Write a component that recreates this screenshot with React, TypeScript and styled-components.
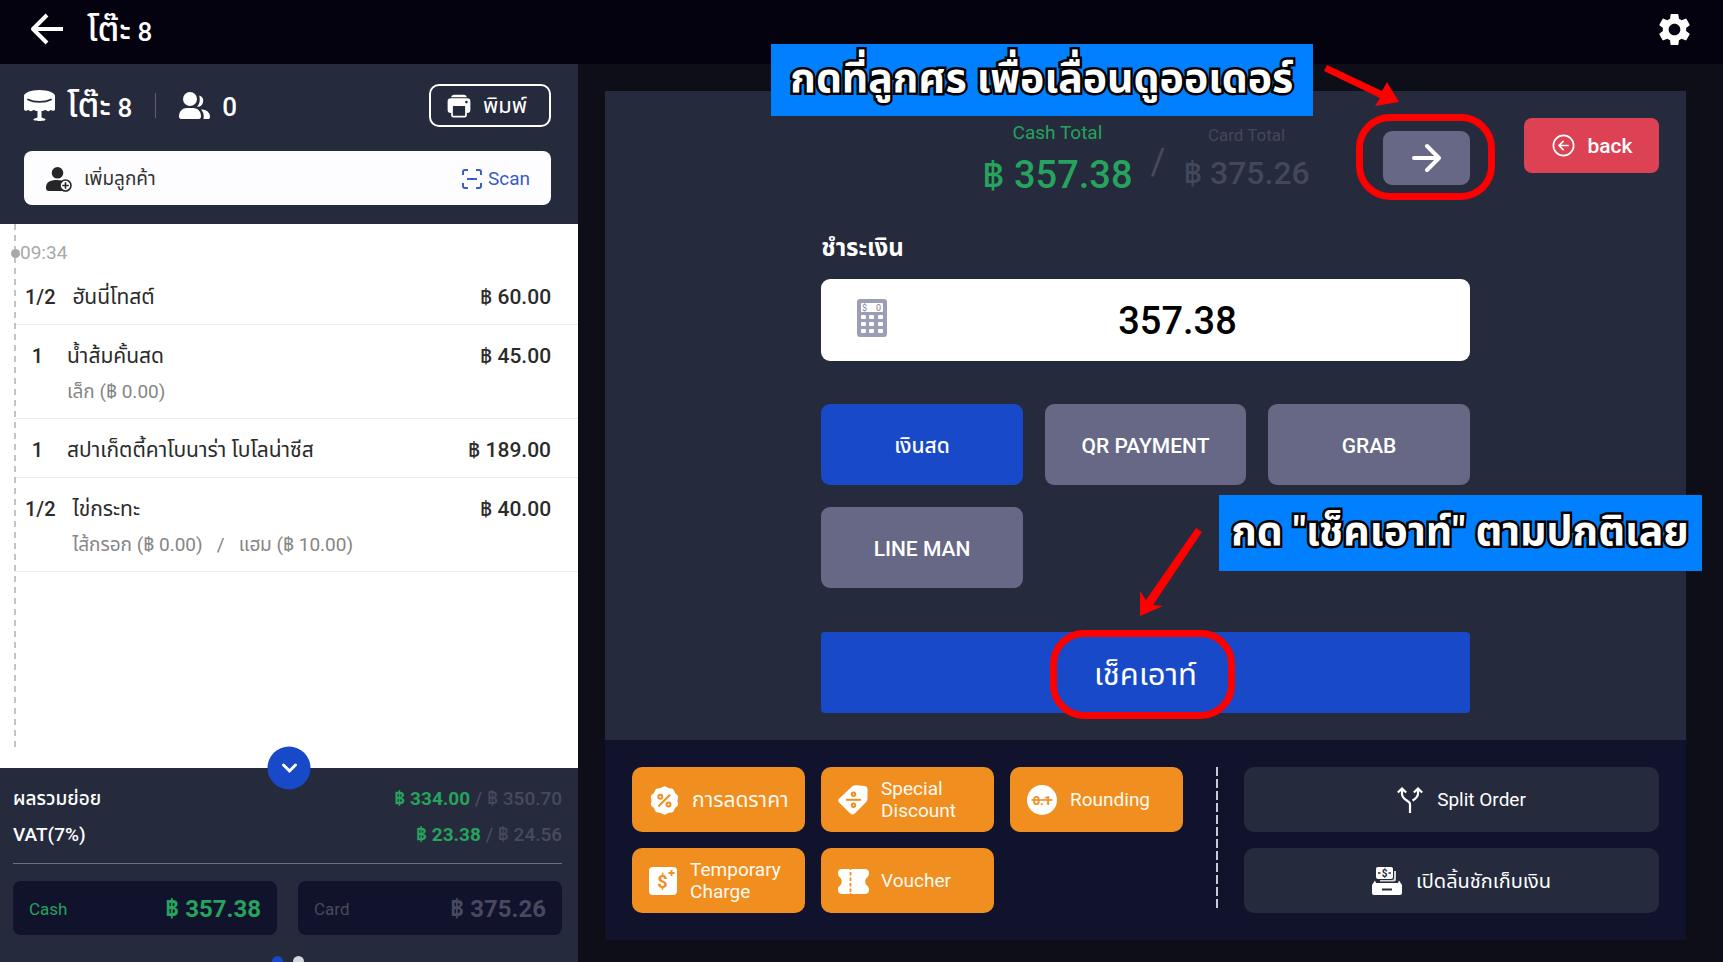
import React from 'react';
import styled, { createGlobalStyle, css } from 'styled-components';
import { MdSettings } from 'react-icons/md';
import { IoPrint, IoArrowBackCircleOutline } from 'react-icons/io5';

const color = {
  topbar: '#04020f',
  page: '#0e0e18',
  panel: '#252a3c',
  deep: '#11122b',
  blue: '#1849c9',
  slate: '#666885',
  orange: '#f08e20',
  red: '#dc4254',
  green: '#26a35c',
  muted: '#474a5e',
  note: '#0080ff',
  mark: '#ff0000',
};

const GlobalStyle = createGlobalStyle`
  * { box-sizing: border-box; }
  body {
    margin: 0;
    background: ${color.page};
    color: #fff;
    font-family: Roboto, "Noto Sans Thai", "Noto Sans", sans-serif;
    font-size: 20px;
    line-height: 24px;
  }
  button, input { font: inherit; color: inherit; border: 0; margin: 0; padding: 0; background: none; }
  button { cursor: pointer; }
  svg { display: block; flex: none; }
`;

const Screen = styled.div`
  display: flex;
  flex-direction: column;
  height: 100vh;
  overflow: hidden;
`;

/* Thai letters sit small beside Roboto, so they take a larger size */
const Thai = styled.span<{ $size: number }>`
  font-size: ${(p) => p.$size}px;
`;

const TopBar = styled.header`
  display: flex;
  align-items: center;
  gap: 23px;
  height: 64px;
  flex: none;
  padding: 0 29px 6px 30px;
  background: ${color.topbar};
`;

const Heading = styled.h1`
  flex: 1;
  margin: 0;
  padding-top: 2px;
  font-size: 26px;
  line-height: 32px;
  font-weight: 500;
`;

const IconButton = styled.button`
  display: flex;
`;

const Body = styled.div`
  display: flex;
  flex: 1;
  min-height: 0;
`;

/* Order column */

const OrderColumn = styled.aside`
  display: flex;
  flex-direction: column;
  width: 33.55%;
  background: ${color.panel};
`;

const OrderHead = styled.div`
  display: flex;
  flex-direction: column;
  gap: 24px;
  height: 160px;
  flex: none;
  padding: 20px 27px 0 24px;
`;

const HeadRow = styled.div`
  display: flex;
  align-items: center;
  height: 43px;
  font-size: 26px;
  line-height: 32px;
  font-weight: 500;
`;

const TableName = styled.span`
  margin-left: 12px;
  padding-top: 2px;
`;

const HeadDivider = styled.span`
  width: 1px;
  height: 25px;
  margin: 0 23px;
  background: #5c6072;
`;

const GuestCount = styled.span`
  flex: 1;
  margin-left: 12px;
  padding-top: 2px;
`;

const PrintButton = styled.button`
  display: flex;
  align-items: center;
  gap: 10px;
  width: 122px;
  height: 43px;
  padding-left: 14px;
  border: 2px solid #fff;
  border-radius: 10px;
  font-size: 22px;
  font-weight: 400;
`;

const CustomerBar = styled.div`
  display: flex;
  align-items: center;
  justify-content: space-between;
  height: 54px;
  padding: 2px 21px 0 22px;
  border-radius: 8px;
  background: #fdfdff;
`;

const CustomerButton = styled.button<{ $accent?: boolean }>`
  display: flex;
  align-items: center;
  gap: ${(p) => (p.$accent ? 6 : 12)}px;
  color: ${(p) => (p.$accent ? '#3a5cc4' : '#333')};
  font-size: 19px;
`;

const OrderList = styled.div`
  position: relative;
  flex: 1;
  min-height: 0;
  background: #fff;
  color: #2b2b2b;
  &::before {
    content: '';
    position: absolute;
    left: 14px;
    top: 0;
    bottom: 20px;
    width: 2px;
    background: repeating-linear-gradient(#c4c4c4 0 6px, transparent 6px 11px);
  }
`;

const OrderTime = styled.div`
  display: flex;
  align-items: center;
  height: 58px;
  padding-left: 11px;
  color: #a9a9a9;
  font-size: 19px;
  &::before {
    content: '';
    width: 9px;
    height: 9px;
    border-radius: 50%;
    background: #a9a9a9;
    z-index: 1;
  }
`;

const Items = styled.ul`
  list-style: none;
  margin: 0;
  padding: 0;
`;

const Item = styled.li<{ $first?: boolean }>`
  display: grid;
  grid-template-columns: auto 1fr auto;
  row-gap: 11px;
  margin-left: 15px;
  padding: ${(p) => (p.$first ? 3 : 19)}px 27px 15px 10px;
  border-bottom: 1px solid #ebedf0;
`;

const Qty = styled.span`
  min-width: 25px;
  text-align: center;
  font-weight: 500;
`;

const ItemName = styled.span`
  height: 24px;
  margin-left: 17px;
  font-size: 21px;
`;

const Price = styled.span`
  font-size: 21px;
  font-weight: 500;
`;

const Options = styled.span`
  grid-column: 2 / 4;
  height: 24px;
  margin-left: 17px;
  padding-top: 1px;
  color: #868686;
  font-size: 19px;
  white-space: pre;
`;

const Summary = styled.section`
  position: relative;
  flex: none;
  height: 194px;
  padding: 19px 16px 0 13px;
`;

const CollapseButton = styled.button`
  position: absolute;
  left: 50%;
  top: 0;
  display: flex;
  align-items: center;
  justify-content: center;
  width: 43px;
  height: 43px;
  border-radius: 50%;
  background: ${color.blue};
  transform: translate(-50%, -50%);
`;

const SumRow = styled.div`
  display: flex;
  justify-content: space-between;
  margin-bottom: 12px;
  font-size: 19px;
  font-weight: 500;
`;

const Cash = styled.span`
  color: ${color.green};
  font-weight: 700;
`;

const Muted = styled.span`
  color: ${color.muted};
`;

const TotalPair = styled.div`
  display: grid;
  grid-template-columns: 1fr 1fr;
  gap: 21px;
  margin-top: 16px;
  padding-top: 17px;
  border-top: 1px solid #6e7182;
`;

const TotalBox = styled.div<{ $cash?: boolean }>`
  display: flex;
  align-items: center;
  justify-content: space-between;
  height: 54px;
  padding: 2px 16px 0;
  border-radius: 8px;
  background: ${color.deep};
  color: ${(p) => (p.$cash ? color.green : color.muted)};
  font-size: 17px;
  strong { font-size: 24px; font-weight: 700; }
`;

const Dots = styled.div`
  display: flex;
  justify-content: center;
  gap: 10px;
  margin-top: 21px;
`;

const Dot = styled.span<{ $on?: boolean }>`
  width: 11px;
  height: 11px;
  border-radius: 50%;
  background: ${(p) => (p.$on ? color.blue : '#d5d6de')};
`;

/* Payment side */

const PaySide = styled.main`
  display: flex;
  flex-direction: column;
  flex: 1;
  padding: 27px 37px 22px 27px;
`;

const PayPanel = styled.section`
  flex: 1;
  background: ${color.panel};
`;

const PayHead = styled.div`
  display: grid;
  grid-template-columns: 4fr 1fr;
  height: 145px;
  padding-top: 27px;
`;

const Totals = styled.div`
  display: flex;
  justify-content: flex-end;
`;

const Total = styled.div<{ $cash?: boolean }>`
  display: flex;
  flex-direction: column;
  align-items: center;
  gap: ${(p) => (p.$cash ? 10 : 6)}px;
  padding-top: ${(p) => (p.$cash ? 3 : 5)}px;
  color: ${(p) => (p.$cash ? color.green : '#43475a')};
  font-size: ${(p) => (p.$cash ? 19 : 17)}px;
  strong {
    font-size: ${(p) => (p.$cash ? 38 : 32)}px;
    line-height: 40px;
    font-weight: 500;
  }
`;

const Slash = styled.span`
  margin: 24px 18px 0;
  color: ${color.muted};
  font-size: 36px;
  line-height: 40px;
`;

const NextWrap = styled.div`
  position: relative;
  width: 87px;
  height: 54px;
  margin: 13px 0 0 73px;
`;

const NextButton = styled.button`
  display: flex;
  align-items: center;
  justify-content: center;
  width: 100%;
  height: 100%;
  border-radius: 9px;
  background: ${color.slate};
`;

const BackButton = styled.button`
  display: flex;
  align-items: center;
  justify-content: center;
  justify-self: end;
  gap: 10px;
  width: 135px;
  height: 55px;
  margin-right: 27px;
  border-radius: 8px;
  background: ${color.red};
  font-size: 21px;
  font-weight: 500;
`;

const PayForm = styled.form`
  width: 60%;
  margin: 0 auto;
`;

const PayLabel = styled.label`
  display: block;
  height: 24px;
  margin-bottom: 19px;
  font-size: 24px;
  font-weight: 700;
`;

const AmountField = styled.div`
  display: flex;
  align-items: center;
  height: 82px;
  padding: 0 36px;
  border-radius: 9px;
  background: #fff;
`;

const AmountInput = styled.input`
  flex: 1;
  min-width: 0;
  padding: 2px 0 0 34px;
  color: #000;
  font-size: 38px;
  line-height: 46px;
  font-weight: 500;
  text-align: center;
  outline: none;
`;

const Methods = styled.div`
  display: grid;
  grid-template-columns: repeat(3, 1fr);
  gap: 22px;
  margin: 43px 0 44px;
`;

const Method = styled.button<{ $active?: boolean }>`
  height: 81px;
  padding-top: 2px;
  border-radius: 9px;
  background: ${(p) => (p.$active ? color.blue : color.slate)};
  font-size: 21px;
  font-weight: 500;
`;

const CheckoutWrap = styled.div`
  position: relative;
`;

const CheckoutButton = styled.button`
  width: 100%;
  height: 81px;
  padding-top: 4px;
  border-radius: 4px;
  background: ${color.blue};
  font-size: 31px;
  line-height: 36px;
`;

const ActionPanel = styled.section`
  display: flex;
  height: 200px;
  padding: 27px 27px 0;
  background: ${color.deep};
`;

const Actions = styled.div`
  display: grid;
  grid-template-columns: repeat(3, 1fr);
  grid-auto-rows: 65px;
  gap: 16px;
  flex: 551 0 0;
`;

const Action = styled.button`
  display: flex;
  align-items: center;
  gap: 13px;
  padding: 1px 0 0 17px;
  border-radius: 10px;
  background: ${color.orange};
  color: #fffaf0;
  font-size: 19px;
  line-height: 22px;
  text-align: left;
`;

const IconSlot = styled.span`
  display: flex;
  justify-content: center;
  width: 30px;
`;

const DashedRule = styled.div`
  width: 2px;
  height: 144px;
  margin: 0 26px 0 33px;
  background: repeating-linear-gradient(#c9c9dc 0 9px, transparent 9px 12px);
`;

const SideActions = styled.div`
  display: grid;
  grid-auto-rows: 65px;
  gap: 16px;
  flex: 415 0 0;
`;

const SideAction = styled.button`
  display: flex;
  align-items: center;
  justify-content: center;
  gap: 14px;
  padding-left: 20px;
  border-radius: 10px;
  background: ${color.panel};
  font-size: 19px;
`;

/* Tutorial marks drawn over the controls */

const overlay = css`
  position: absolute;
  pointer-events: none;
  z-index: 2;
`;

const Ring = styled.span<{ $kind: 'next' | 'checkout' }>`
  ${overlay}
  border: 7px solid ${color.mark};
  border-radius: 34px;
  ${(p) =>
    p.$kind === 'next'
      ? 'inset: -17px -25px -15px -27px;'
      : 'width: 185px; height: 89px; left: calc(50% - 96px); top: -2px;'}
`;

const Note = styled.p<{ $kind: 'next' | 'checkout' }>`
  ${overlay}
  display: flex;
  justify-content: center;
  margin: 0;
  background: ${color.note};
  color: #fff;
  font-size: 41px;
  font-weight: 700;
  white-space: nowrap;
  -webkit-text-stroke: 5px #000;
  paint-order: stroke fill;
  ${(p) =>
    p.$kind === 'next'
      ? 'width: 542px; height: 72px; line-height: 68px; right: calc(100% + 70px); top: -87px;'
      : 'width: 483px; height: 76px; line-height: 72px; left: calc(50% + 73px); bottom: calc(100% + 61px);'}
`;

const NextArrow = styled.svg`
  ${overlay}
  right: calc(100% - 17px);
  top: -66px;
`;

const CheckoutArrow = styled.svg`
  ${overlay}
  left: calc(50% - 7px);
  bottom: calc(100% + 16px);
`;

/* Icons */

const BackArrow = () => (
  <svg width="34" height="32" viewBox="0 0 34 32" fill="none" stroke="#fff" strokeWidth="4" strokeLinejoin="round">
    <path d="M33 16H4M17 2L3 16l14 14" />
  </svg>
);

const ForwardArrow = () => (
  <svg width="30" height="30" viewBox="0 0 30 30" fill="none" stroke="#fff" strokeWidth="4" strokeLinecap="round" strokeLinejoin="round">
    <path d="M3 15h25M16 3l12 12-12 12" />
  </svg>
);

const TableIcon = () => (
  <svg width="31" height="31" viewBox="0 0 31 31" fill="#fff">
    <path d="M15.500 0C7 0 0 2.800 0 5.800V19c0 1.600 1.600 2.200 2.800 1.600.8-.4 1.400-1 2.200-.2 1 1 2.600 1 3.600 0 .8-.8 1.600-.4 2.400.2.800.6 1.800.6 2.500.2V27c0 1.200-4 1-4 2.600 0 1.200 3 1.400 6 1.400s6-.2 6-1.400c0-1.600-4-1.400-4-2.600v-6.200c.7.4 1.700.4 2.500-.2.800-.6 1.600-1 2.400-.2 1 1 2.600 1 3.600 0 .8-.8 1.400-.2 2.200.2 1.200.6 2.800 0 2.800-1.600V5.800C31 2.800 24 0 15.500 0z" />
    <path d="M4 9.500c6 3.200 17 3.200 23 0" fill="none" stroke={color.panel} strokeWidth="1.800" strokeLinecap="round" />
  </svg>
);

const PeopleIcon = () => (
  <svg width="31" height="27" viewBox="0 0 31 27" fill="#fff">
    <circle cx="11" cy="7" r="7" />
    <path d="M0 24.500C0 19 3.500 16 8 16h6c4.500 0 8 3 8 8.500 0 1.600-.8 2.500-2.200 2.500H2.200C.8 27 0 26.100 0 24.500z" />
    <path d="M20.200 3.500A5.800 5.800 0 0118 14.800c3-3 3.200-7.500 2.200-11.300zM22 17.500c5 0 9 2.600 9 7.200 0 1.500-.8 2.300-2 2.300h-4.500c.8-4-.2-7.200-2.500-9.500z" />
  </svg>
);

const AddPersonIcon = () => (
  <svg width="26" height="25" viewBox="0 0 26 25">
    <circle cx="11.500" cy="5.800" r="5.800" fill="#26262a" />
    <path d="M0 21c0-6 4-8 11-8s10 3 10 8-1 3-3 3H3c-2 0-3-1-3-3z" fill="#26262a" />
    <circle cx="19.500" cy="18.500" r="5.500" fill="#fff" stroke="#26262a" strokeWidth="1.600" />
    <path d="M19.500 15.300v6.400M16.300 18.500h6.400" stroke="#26262a" strokeWidth="1.600" />
  </svg>
);

const ScanIcon = () => (
  <svg width="20" height="20" viewBox="0 0 20 20" fill="none" stroke="#3a5cc4" strokeWidth="2">
    <path d="M1 6V3a2 2 0 012-2h3M14 1h3a2 2 0 012 2v3M19 14v3a2 2 0 01-2 2h-3M6 19H3a2 2 0 01-2-2v-3M5 10h10" />
  </svg>
);

const CalculatorIcon = () => (
  <svg width="30" height="42" viewBox="0 0 30 42">
    <rect width="30" height="38" rx="3" fill="#9c9eb8" />
    <rect x="4" y="4" width="22" height="9" rx="1" fill="#fff" />
    <text x="5" y="12" fontSize="9" fill="#8082a0" fontFamily="Roboto, sans-serif">$</text>
    <text x="19" y="12" fontSize="9" fill="#8082a0" fontFamily="Roboto, sans-serif">0</text>
    {[16, 23, 30].map((y) =>
      [4, 12, 21].map((x) => <rect key={`${x}-${y}`} x={x} y={y} width="5" height="4" rx="1" fill="#fff" />),
    )}
  </svg>
);

const scallop = (() => {
  const points: string[] = [];
  for (let i = 0; i <= 120; i += 1) {
    const a = (i / 120) * Math.PI * 2;
    const r = 13.6 + 0.6 * Math.cos(a * 10);
    points.push(`${(14 + r * Math.sin(a)).toFixed(2)} ${(14 - r * Math.cos(a)).toFixed(2)}`);
  }
  return `M${points.join('L')}z`;
})();

const PercentIcon = () => (
  <svg width="29" height="29" viewBox="-.5 -.5 29 29" fill="none" stroke={color.orange} strokeWidth="2">
    <path d={scallop} fill="#fff" stroke="none" />
    <circle cx="9.800" cy="10.200" r="2" />
    <circle cx="18" cy="18" r="2" />
    <path d="M19 8.800l-10.500 10.500" strokeLinecap="round" />
  </svg>
);

const TagIcon = () => (
  <svg width="30" height="30" viewBox="0 0 30 30" fill="none" stroke={color.orange} strokeWidth="2">
    <path d="M14 1.500C15.500.2 17 0 19 .2l7.500.8c2 .2 3 1.400 3 3.300v8.500c0 1.800-.3 3-1.500 4.500L17 28.300c-1.400 1.700-3.200 1.700-4.700.2L1.300 17.800c-1.600-1.500-1.500-3 0-4.400z" fill="#fff" stroke="none" />
    <circle cx="15.500" cy="9.200" r="1.700" />
    <path d="M8 14.800h15" />
    <circle cx="15.500" cy="20.300" r="1.700" />
  </svg>
);

const RoundingIcon = () => (
  <svg width="30" height="30" viewBox="0 0 30 30">
    <circle cx="15" cy="15" r="15" fill="#fff" />
    <text x="15" y="19.500" textAnchor="middle" fontSize="13" fontWeight="700" fill={color.orange} fontFamily="Roboto, sans-serif">0.1</text>
    <path d="M4.500 15h21" stroke={color.orange} strokeWidth="1.600" />
  </svg>
);

const ChargeIcon = () => (
  <svg width="28" height="28" viewBox="0 0 28 28">
    <rect width="28" height="28" rx="4" fill="#fff" />
    <text x="13.500" y="20.500" textAnchor="middle" fontSize="18" fontWeight="700" fill={color.orange} fontFamily="Roboto, sans-serif">$</text>
    <path d="M22.500 3v6M19.500 6h6" stroke={color.orange} strokeWidth="1.800" />
  </svg>
);

const VoucherIcon = () => (
  <svg width="31" height="25" viewBox="0 0 31 25">
    <path d="M4 0h7.500a1 1 0 002 0H27c2.500 0 4 1.500 4 4s-.5 3-1.800 4.200c-2.600 2.400-2.600 6.200 0 8.600C30.500 18 31 18.500 31 21s-1.500 4-4 4H13.500a1 1 0 00-2 0H4c-2.500 0-4-1.500-4-4s.5-3 1.800-4.200c2.600-2.400 2.600-6.200 0-8.600C.5 7 0 6.500 0 4s1.500-4 4-4z" fill="#fff" />
    <path d="M12.500 3v3.500M12.500 8.500v3.500M12.500 14v3.500M12.500 19.500V23" stroke={color.orange} strokeWidth="1.800" />
  </svg>
);

const SplitIcon = () => (
  <svg width="26" height="26" viewBox="0 0 26 26" fill="none" stroke="#fff" strokeWidth="2.200">
    <path d="M13 26v-9c0-3.500-8-4-8-10V3M15.500 13.500c2.500-1.500 5.500-3 5.500-7V3M.8 5.500L5 1.600l4.200 3.900M16.800 5.500L21 1.600l4.200 3.900" />
  </svg>
);

const DrawerIcon = () => (
  <svg width="30" height="28" viewBox="0 0 30 28" fill="#fff">
    <path d="M22 4h2v8.500a2 2 0 01-2 2H8V13h12a2 2 0 002-2z" opacity=".8" />
    <rect x="4" width="17" height="12" rx="2" />
    <text x="12.500" y="9.800" textAnchor="middle" fontSize="10" fontWeight="700" fill={color.panel} fontFamily="Roboto, sans-serif">$</text>
    <path d="M6 6h2.500M16.500 6H19" stroke={color.panel} strokeWidth="1.400" />
    <path d="M3 13.500l1 2.500h22l1-2.500 3 4.500v8a2 2 0 01-2 2H2a2 2 0 01-2-2v-8z" />
    <rect x="10" y="21.500" width="10" height="2" fill={color.panel} />
  </svg>
);

const items = [
  { qty: '1/2', name: 'ฮันนี่โทสต์', price: '60.00' },
  { qty: '1', name: 'น้ำส้มคั้นสด', price: '45.00', options: 'เล็ก (฿ 0.00)' },
  { qty: '1', name: 'สปาเก็ตตี้คาโบนาร่า โบโลน่าซีส', price: '189.00' },
  { qty: '1/2', name: 'ไข่กระทะ', price: '40.00', options: 'ไส้กรอก (฿ 0.00)   /   แฮม (฿ 10.00)' },
];

const methods = ['เงินสด', 'QR PAYMENT', 'GRAB', 'LINE MAN'];

const actions = [
  { label: <Thai $size={21}>การลดราคา</Thai>, icon: <PercentIcon /> },
  { label: 'Special Discount', icon: <TagIcon /> },
  { label: 'Rounding', icon: <RoundingIcon /> },
  { label: 'Temporary Charge', icon: <ChargeIcon /> },
  { label: 'Voucher', icon: <VoucherIcon /> },
];

export default function App() {
  const [method, setMethod] = React.useState(methods[0]);
  const [amount, setAmount] = React.useState('357.38');
  return (
    <Screen>
      <GlobalStyle />
      <TopBar>
        <IconButton aria-label="Go back"><BackArrow /></IconButton>
        <Heading><Thai $size={34}>โต๊ะ</Thai> 8</Heading>
        <IconButton aria-label="Settings"><MdSettings size={39} /></IconButton>
      </TopBar>
      <Body>
        <OrderColumn>
          <OrderHead>
            <HeadRow>
              <TableIcon />
              <TableName><Thai $size={34}>โต๊ะ</Thai> 8</TableName>
              <HeadDivider />
              <PeopleIcon />
              <GuestCount>0</GuestCount>
              <PrintButton><IoPrint size={28} />พิมพ์</PrintButton>
            </HeadRow>
            <CustomerBar>
              <CustomerButton><AddPersonIcon />เพิ่มลูกค้า</CustomerButton>
              <CustomerButton $accent><ScanIcon />Scan</CustomerButton>
            </CustomerBar>
          </OrderHead>
          <OrderList>
            <OrderTime>09:34</OrderTime>
            <Items>
              {items.map((item, i) => (
                <Item key={item.name} $first={i === 0}>
                  <Qty>{item.qty}</Qty>
                  <ItemName>{item.name}</ItemName>
                  <Price>฿ {item.price}</Price>
                  {item.options && <Options>{item.options}</Options>}
                </Item>
              ))}
            </Items>
          </OrderList>
          <Summary>
            <CollapseButton aria-label="Collapse">
              <svg width="16" height="12" viewBox="0 0 16 12" fill="none" stroke="#fff" strokeWidth="3" strokeLinecap="round">
                <path d="M2 2.500l6 6 6-6" />
              </svg>
            </CollapseButton>
            <SumRow>
              <span>ผลรวมย่อย</span>
              <Muted><Cash>฿ 334.00</Cash> / ฿ 350.70</Muted>
            </SumRow>
            <SumRow>
              <span>VAT(7%)</span>
              <Muted><Cash>฿ 23.38</Cash> / ฿ 24.56</Muted>
            </SumRow>
            <TotalPair>
              <TotalBox $cash>Cash<strong>฿ 357.38</strong></TotalBox>
              <TotalBox>Card<strong>฿ 375.26</strong></TotalBox>
            </TotalPair>
            <Dots><Dot $on /><Dot /></Dots>
          </Summary>
        </OrderColumn>
        <PaySide>
          <PayPanel>
            <PayHead>
              <Totals>
                <Total $cash>Cash Total<strong>฿ 357.38</strong></Total>
                <Slash>/</Slash>
                <Total>Card Total<strong>฿ 375.26</strong></Total>
                <NextWrap>
                  <NextButton aria-label="Next"><ForwardArrow /></NextButton>
                  <Ring $kind="next" />
                  <Note $kind="next">กดที่ลูกศร เพื่อเลื่อนดูออเดอร์</Note>
                  <NextArrow width="76" height="42" viewBox="0 0 76 42" fill={color.mark}>
                    <path d="M3 0L58 26 63 17 75 37 51 41 56 33 0 6z" />
                  </NextArrow>
                </NextWrap>
              </Totals>
              <BackButton><IoArrowBackCircleOutline size={27} />back</BackButton>
            </PayHead>
            <PayForm onSubmit={(e) => e.preventDefault()}>
              <PayLabel htmlFor="amount">ชำระเงิน</PayLabel>
              <AmountField>
                <CalculatorIcon />
                <AmountInput id="amount" value={amount} onChange={(e) => setAmount(e.target.value)} />
              </AmountField>
              <Methods>
                {methods.map((m) => (
                  <Method key={m} type="button" $active={m === method} onClick={() => setMethod(m)}>{m}</Method>
                ))}
              </Methods>
              <CheckoutWrap>
                <CheckoutButton type="submit">เช็คเอาท์</CheckoutButton>
                <Ring $kind="checkout" />
                <Note $kind="checkout">กด "เช็คเอาท์" ตามปกติเลย</Note>
                <CheckoutArrow width="64" height="88" viewBox="0 0 64 88" fill={color.mark}>
                  <path d="M57 0L63 4 14 77 24 78 1 88 1 63 7 72z" />
                </CheckoutArrow>
              </CheckoutWrap>
            </PayForm>
          </PayPanel>
          <ActionPanel>
            <Actions>
              {actions.map((a, i) => (
                <Action key={i}><IconSlot>{a.icon}</IconSlot><span>{a.label}</span></Action>
              ))}
            </Actions>
            <DashedRule />
            <SideActions>
              <SideAction><SplitIcon />Split Order</SideAction>
              <SideAction><DrawerIcon /><Thai $size={20}>เปิดลิ้นชักเก็บเงิน</Thai></SideAction>
            </SideActions>
          </ActionPanel>
        </PaySide>
      </Body>
    </Screen>
  );
}
